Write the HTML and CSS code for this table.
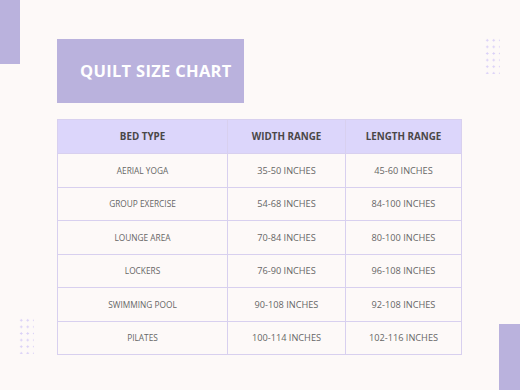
FILE: index.html
```html
<!DOCTYPE html>
<html lang="en">
<head>
  <meta charset="UTF-8" />
  <title>Quilt Size Chart</title>
  <link rel="stylesheet" href="styles.css">
</head>
<body>
  <div class="page">
    <div class="corner top-left"></div>
    <div class="corner bottom-right"></div>
    <div class="dots dots-top"></div>
    <div class="dots dots-bottom"></div>

    <div class="title-box">QUILT SIZE CHART</div>

    <table class="chart">
      <thead>
        <tr>
          <th>BED TYPE</th>
          <th>WIDTH RANGE</th>
          <th>LENGTH RANGE</th>
        </tr>
      </thead>
      <tbody>
        <tr><td class="name">AERIAL YOGA</td><td>35-50 INCHES</td><td>45-60 INCHES</td></tr>
        <tr><td class="name">GROUP EXERCISE</td><td>54-68 INCHES</td><td>84-100 INCHES</td></tr>
        <tr><td class="name">LOUNGE AREA</td><td>70-84 INCHES</td><td>80-100 INCHES</td></tr>
        <tr><td class="name">LOCKERS</td><td>76-90 INCHES</td><td>96-108 INCHES</td></tr>
        <tr><td class="name">SWIMMING POOL</td><td>90-108 INCHES</td><td>92-108 INCHES</td></tr>
        <tr><td class="name">PILATES</td><td>100-114 INCHES</td><td>102-116 INCHES</td></tr>
      </tbody>
    </table>
  </div>
</body>
</html>
```

FILE: styles.css
```css
* {
  box-sizing: border-box;
  margin: 0;
  padding: 0;
}

body {
  background: #fdf9f8;
  font-family: 'Open Sans', sans-serif;
}

.page {
  position: relative;
  width: 520px;
  height: 390px;
  overflow: hidden;
  padding: 39px 58px 0 57px;
}

.corner {
  position: absolute;
  background: #bab2dd;
}

.top-left {
  top: 0;
  left: 0;
  width: 20px;
  height: 64px;
}

.bottom-right {
  right: 0;
  bottom: 0;
  width: 21px;
  height: 66px;
}

.dots {
  position: absolute;
  width: 16px;
  height: 37px;
  background-image: radial-gradient(circle, #d9d0f7 0.9px, transparent 1.3px);
  background-size: 6.5px 6.6px;
}

.dots-top {
  top: 37px;
  left: 484px;
}

.dots-bottom {
  top: 317px;
  left: 18px;
}

.title-box {
  width: 187px;
  height: 64px;
  background: #bab2dd;
  color: #fff;
  font-size: 16.5px;
  font-weight: 700;
  line-height: 64px;
  padding-left: 23px;
  letter-spacing: 0.3px;
}

.chart {
  margin-top: 16px;
  width: 405px;
  border-collapse: collapse;
  border: 1px solid #d8d0ef;
  text-align: center;
}

.chart th,
.chart td {
  border: 1px solid #d8d0ef;
}

.chart th {
  background: #dcd6fb;
  height: 34px;
  font-size: 9.8px;
  font-weight: 700;
  color: #4a4748;
}

.chart th:nth-child(1) { width: 170px; }
.chart th:nth-child(2) { width: 118px; }

.chart td {
  height: 33.5px;
  font-size: 9.2px;
  color: #666;
}

.chart td.name {
  font-size: 8.3px;
}
```
